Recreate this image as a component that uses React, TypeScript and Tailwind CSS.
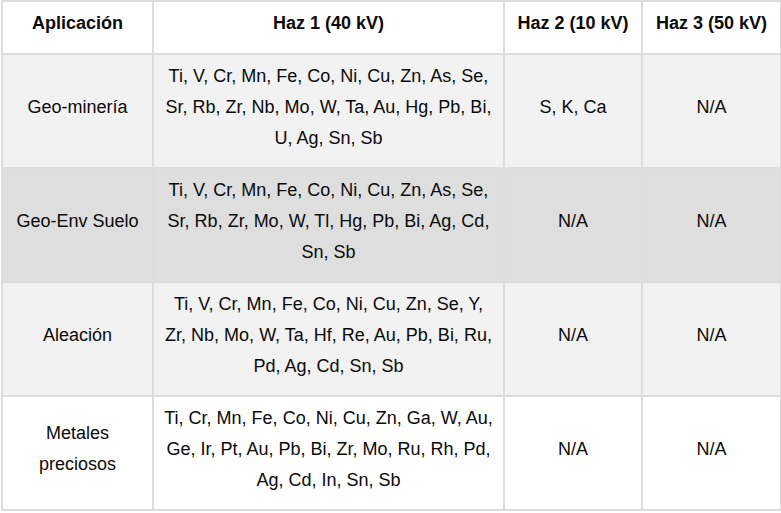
const rows = [
  {
    app: "Geo-minería",
    haz1: ["Ti, V, Cr, Mn, Fe, Co, Ni, Cu, Zn, As, Se,", "Sr, Rb, Zr, Nb, Mo, W, Ta, Au, Hg, Pb, Bi,", "U, Ag, Sn, Sb"],
    haz2: "S, K, Ca",
    haz3: "N/A",
    bg: "bg-[#f2f2f2]",
  },
  {
    app: "Geo-Env Suelo",
    haz1: ["Ti, V, Cr, Mn, Fe, Co, Ni, Cu, Zn, As, Se,", "Sr, Rb, Zr, Mo, W, Tl, Hg, Pb, Bi, Ag, Cd,", "Sn, Sb"],
    haz2: "N/A",
    haz3: "N/A",
    bg: "bg-[#dedede]",
  },
  {
    app: "Aleación",
    haz1: ["Ti, V, Cr, Mn, Fe, Co, Ni, Cu, Zn, Se, Y,", "Zr, Nb, Mo, W, Ta, Hf, Re, Au, Pb, Bi, Ru,", "Pd, Ag, Cd, Sn, Sb"],
    haz2: "N/A",
    haz3: "N/A",
    bg: "bg-[#f2f2f2]",
  },
  {
    app: ["Metales", "preciosos"],
    haz1: ["Ti, Cr, Mn, Fe, Co, Ni, Cu, Zn, Ga, W, Au,", "Ge, Ir, Pt, Au, Pb, Bi, Zr, Mo, Ru, Rh, Pd,", "Ag, Cd, In, Sn, Sb"],
    haz2: "N/A",
    haz3: "N/A",
    bg: "bg-white",
  },
];

const cell = "border-2 border-[#dcdcdc] text-center align-middle";

export default function App() {
  return (
    <div className="w-[781px] h-[513px] bg-white pl-px font-['Liberation_Sans',Arial,sans-serif] text-[18px] text-[#0a0a0a]">
      <table className="table-fixed border-collapse w-[779px]">
        <colgroup>
          <col className="w-[151px]" />
          <col className="w-[351px]" />
          <col className="w-[138px]" />
          <col className="w-[139px]" />
        </colgroup>
        <thead>
          <tr className="h-[53px] bg-white">
            <th className={`${cell} font-bold pb-[8px]`}>Aplicación</th>
            <th className={`${cell} font-bold pb-[8px]`}>Haz 1 (40 kV)</th>
            <th className={`${cell} font-bold pb-[8px]`}>Haz 2 (10 kV)</th>
            <th className={`${cell} font-bold pb-[8px]`}>Haz 3 (50 kV)</th>
          </tr>
        </thead>
        <tbody>
          {rows.map((r, i) => (
            <tr key={i} className={`h-[114px] ${r.bg}`}>
              <td className={`${cell} leading-[31px] pb-[8px]`}>
                {Array.isArray(r.app) ? r.app.map((l) => <div key={l}>{l}</div>) : r.app}
              </td>
              <td className={`${cell} leading-[31px] pb-[8px]`}>
                {r.haz1.map((l) => (
                  <div key={l}>{l}</div>
                ))}
              </td>
              <td className={`${cell} pb-[8px]`}>{r.haz2}</td>
              <td className={`${cell} pb-[8px]`}>{r.haz3}</td>
            </tr>
          ))}
        </tbody>
      </table>
    </div>
  );
}
